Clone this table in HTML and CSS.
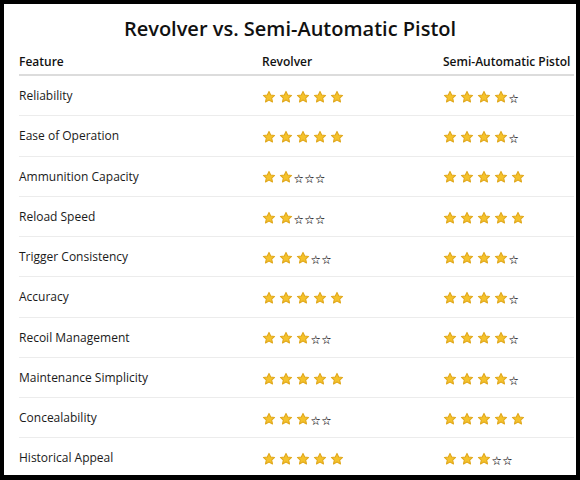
FILE: index.html
```html
<!DOCTYPE html>
<html>
<head>
<meta charset="utf-8">
<link rel="stylesheet" href="styles.css">
</head>
<body>
<svg width="0" height="0" class="defs" aria-hidden="true">
  <defs>
    <symbol id="star" viewBox="0 0 24 24">
      <path d="M12 2.4l2.9 6.1 6.7.8-5 4.6 1.4 6.6L12 17.2l-6 3.3 1.4-6.6-5-4.6 6.7-.8z" fill="#F5C22B" stroke="#E0A71C" stroke-width="1.8" stroke-linejoin="round"/>
    </symbol>
  </defs>
</svg>
<div class="page">
  <h1 class="title">Revolver vs. Semi-Automatic Pistol</h1>
  <table class="cmp">
    <thead>
      <tr><th class="c1">Feature</th><th class="c2">Revolver</th><th class="c3">Semi-Automatic Pistol</th></tr>
    </thead>
    <tbody id="rows"></tbody>
  </table>
</div>
<script src="app.js"></script>
</body>
</html>
```
FILE: app.js
```js
const data = [
  ["Reliability", 5, 4],
  ["Ease of Operation", 5, 4],
  ["Ammunition Capacity", 2, 5],
  ["Reload Speed", 2, 5],
  ["Trigger Consistency", 3, 4],
  ["Accuracy", 5, 4],
  ["Recoil Management", 3, 4],
  ["Maintenance Simplicity", 5, 4],
  ["Concealability", 3, 5],
  ["Historical Appeal", 5, 3]
];
function stars(n) {
  let s = '<span class="stars" aria-label="' + n + ' of 5">';
  for (let i = 0; i < n; i++) s += '<svg class="fs"><use href="#star"/></svg>';
  if (n < 5) s += '<span class="es">' + '☆'.repeat(5 - n) + '</span>';
  return s + '</span>';
}
const tb = document.getElementById('rows');
tb.innerHTML = data.map(r =>
  '<tr><td>' + r[0] + '</td><td>' + stars(r[1]) + '</td><td>' + stars(r[2]) + '</td></tr>'
).join('');
```
FILE: styles.css
```css
html, body { margin: 0; padding: 0; }
body {
  background: #000;
  padding: 4px 4px 5px 4px;
  width: 580px;
  height: 480px;
  box-sizing: border-box;
  overflow: hidden;
  font-family: "Open Sans", "Noto Sans", sans-serif;
  color: #1a1a1a;
}
.defs { position: absolute; }
.page {
  background: #fff;
  height: 471px;
  overflow: hidden;
  padding-top: 10px;
  box-sizing: border-box;
}
.title {
  margin: 0;
  text-align: center;
  font-size: 20px;
  font-weight: 600;
  line-height: 30px;
  color: #111;
}
.cmp {
  margin: 4px 0 0 15px;
  width: 555px;
  border-collapse: collapse;
  font-size: 12px;
}
.cmp th {
  text-align: left;
  font-weight: 600;
  height: 26px;
  padding: 0;
  border-bottom: 2px solid #dcdcdc;
  color: #111;
  vertical-align: middle;
}
.cmp td {
  height: 39.25px;
  padding: 0;
  border-bottom: 1px solid #ececec;
  vertical-align: middle;
}
.c1 { width: 243px; }
.c2 { width: 181px; }
.stars { display: inline-flex; align-items: center; gap: 3px; vertical-align: middle; }
.fs { width: 14px; height: 14px; display: block; }
.es {
  font-family: "Noto Sans CJK JP", "DejaVu Sans", sans-serif;
  font-size: 9.5px;
  font-weight: 700;
  letter-spacing: 1.3px;
  color: #000;
  margin-left: -2px;
  position: relative;
  top: 1px;
}
```
